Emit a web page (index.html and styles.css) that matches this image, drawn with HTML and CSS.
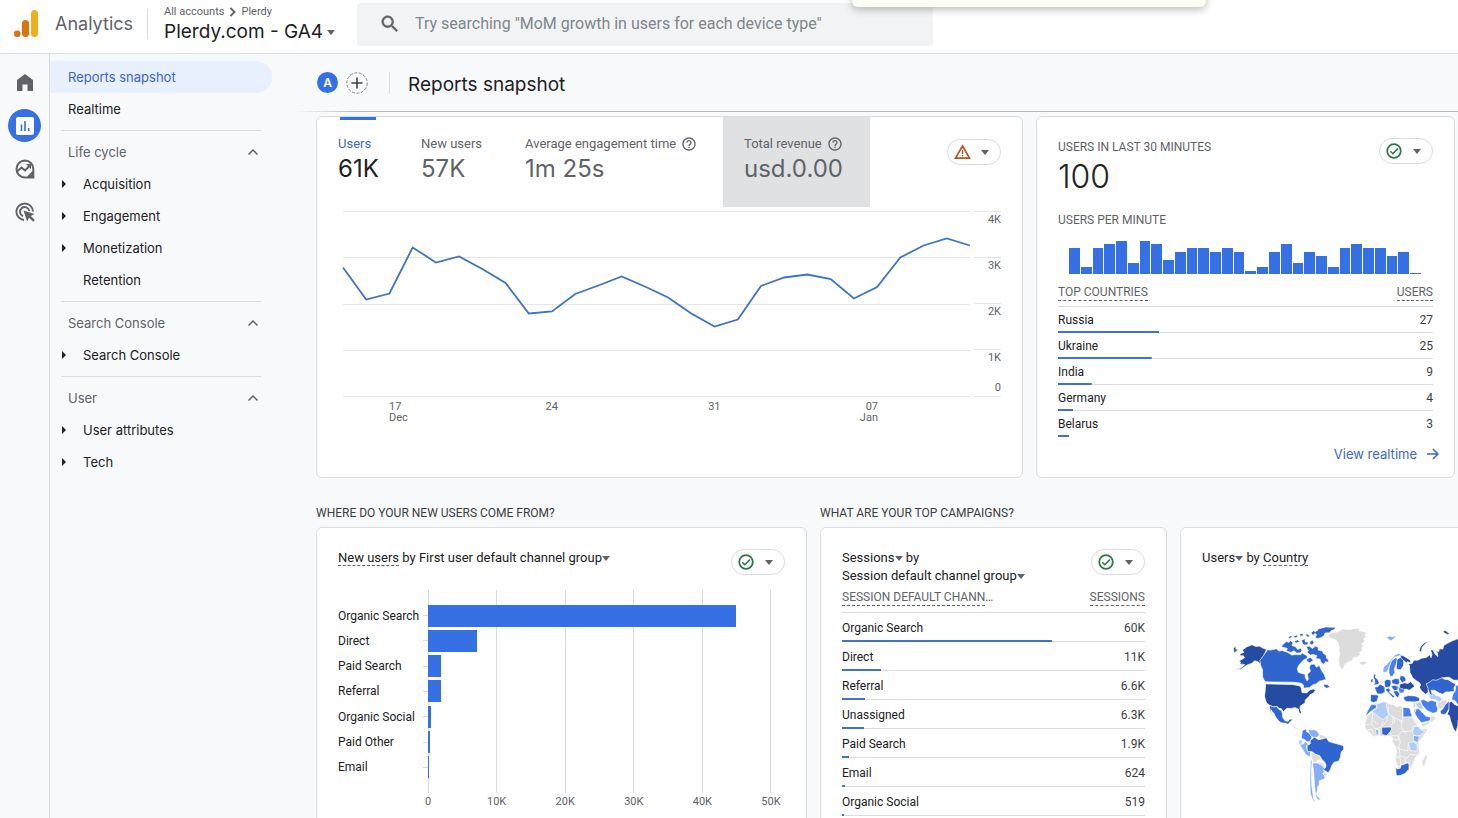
FILE: index.html
```html
<!DOCTYPE html>
<html lang="en">
<head>
<meta charset="utf-8">
<meta name="viewport" content="width=device-width, initial-scale=1">
<title>Analytics - Reports snapshot</title>
<link rel="stylesheet" href="styles.css">
</head>
<body>
<svg class="defs" aria-hidden="true">
  <symbol id="ok" viewBox="0 0 24 24"><circle cx="12" cy="12" r="10.2" fill="none" stroke="#2b7a43" stroke-width="2.6"/><path d="M6.6 12.4l3.7 3.7 7.4-7.6" fill="none" stroke="#2b7a43" stroke-width="2.4"/></symbol>
  <symbol id="help" viewBox="0 0 24 24"><path fill="#5f6368" d="M11 18h2v-2h-2v2zm1-16C6.48 2 2 6.48 2 12s4.48 10 10 10 10-4.480 10-10S17.520 2 12 2zm0 18c-4.410 0-8-3.590-8-8s3.590-8 8-8 8 3.590 8 8-3.590 8-8 8zm0-14c-2.210 0-4 1.790-4 4h2c0-1.100.9-2 2-2s2 .9 2 2c0 2-3 1.750-3 5h2c0-2.250 3-2.500 3-5 0-2.210-1.790-4-4-4z"/></symbol>
  <symbol id="up" viewBox="0 0 12 12"><path d="M1.500 8.500L6 4l4.500 4.500" fill="none" stroke="#5f6368" stroke-width="1.500"/></symbol>
</svg>

<header class="topbar">
  <a class="brand" href="#">
    <svg width="24" height="28" viewBox="0 0 24 28" aria-hidden="true"><rect x="17" y="0" width="7" height="27" rx="3.500" fill="#efb01c"/><rect x="8" y="10" width="7" height="17" rx="3.500" fill="#d9730d"/><circle cx="3.300" cy="23.700" r="3.300" fill="#d9730d"/></svg>
    <span>Analytics</span>
  </a>
  <div class="account">
    <nav class="crumbs" aria-label="Account"><span>All accounts</span><svg width="7" height="10" viewBox="0 0 7 10" aria-hidden="true"><path d="M1.500 1l4 4-4 4" fill="none" stroke="#5f6368" stroke-width="1.800"/></svg><span>Plerdy</span></nav>
    <button class="property">Plerdy.com - GA4<i class="caret"></i></button>
  </div>
  <label class="search">
    <svg width="22" height="22" viewBox="0 0 24 24" aria-label="Search"><path fill="#5f6368" stroke="#5f6368" stroke-width=".5" d="M15.500 14h-.79l-.28-.27C15.410 12.590 16 11.110 16 9.500 16 5.910 13.090 3 9.500 3S3 5.910 3 9.500 5.910 16 9.500 16c1.610 0 3.090-.59 4.230-1.570l.27.280v.79l5 4.990L20.490 19l-4.990-5zm-6 0C7.010 14 5 11.990 5 9.500S7.010 5 9.500 5 14 7.010 14 9.500 11.990 14 9.500 14z"/></svg>
    <input type="search" placeholder="Try searching &quot;MoM growth in users for each device type&quot;">
  </label>
  <div class="popup"></div>
</header>

<div class="app">
  <nav class="rail" aria-label="Primary">
    <a href="#" aria-label="Home"><svg width="16" height="17" viewBox="0 0 16 17"><path fill="#5f6368" d="M0 17V6l8-6 8 6v11h-5.500v-6.500h-5V17z"/></svg></a>
    <a href="#" class="current" aria-label="Reports"><svg width="18" height="18" viewBox="0 0 18 18"><rect width="18" height="18" rx="2" fill="#fff"/><path d="M5.500 7.500V14M9 4v10M12.700 11v3" stroke="#3571e5" stroke-width="1.600"/></svg></a>
    <a href="#" aria-label="Explore"><svg width="20" height="20" viewBox="0 0 20 20"><path fill="none" stroke="#5f6368" stroke-width="2" d="M10 1.500a8.500 8.500 0 1 0 0 17h8.300V10A8.400 8.400 0 0 0 10 1.500z"/><path fill="none" stroke="#5f6368" stroke-width="2" d="M2 12.500l4.500-4 3.500 3 4.500-4.500M18 13l-5 5"/><path fill="#5f6368" d="M11 5h5v5zM19 13v6h-6z"/></svg></a>
    <a href="#" aria-label="Advertising"><svg width="20" height="20" viewBox="0 0 20 20"><path fill="none" stroke="#5f6368" stroke-width="1.900" d="M9 18A8.300 8.300 0 1 1 18 9.500M8 14.200A4.700 4.700 0 1 1 14.300 9"/><path fill="#5f6368" d="M8.500 8.500l11 3.600-3.700 2 4 4-1.700 1.700-4-4-2 3.700z"/></svg></a>
  </nav>

  <nav class="side" aria-label="Reports">
    <a href="#" class="item selected">Reports snapshot</a>
    <a href="#" class="item">Realtime</a>
    <hr>
    <button class="group">Life cycle<svg width="12" height="12"><use href="#up"/></svg></button>
    <a href="#" class="item sub more">Acquisition</a>
    <a href="#" class="item sub more">Engagement</a>
    <a href="#" class="item sub more">Monetization</a>
    <a href="#" class="item sub">Retention</a>
    <hr>
    <button class="group">Search Console<svg width="12" height="12"><use href="#up"/></svg></button>
    <a href="#" class="item sub more">Search Console</a>
    <hr>
    <button class="group">User<svg width="12" height="12"><use href="#up"/></svg></button>
    <a href="#" class="item sub more">User attributes</a>
    <a href="#" class="item sub more">Tech</a>
  </nav>

  <main class="main">
    <div class="titlebar">
      <button class="avatar">A</button>
      <button class="add" aria-label="Add comparison"><svg width="22" height="22" viewBox="0 0 22 22"><circle cx="11" cy="11" r="10.200" fill="none" stroke="#80868b" stroke-dasharray="3 1.500"/><path d="M11 5.500v11M5.500 11h11" stroke="#3c4043" stroke-width="1.600"/></svg></button>
      <h1>Reports snapshot</h1>
    </div>

    <div class="row top">
      <section class="card trend">
        <div class="metrics">
          <button class="metric users on"><span>Users</span><b>61K</b></button>
          <button class="metric new"><span>New users</span><b>57K</b></button>
          <button class="metric time"><span>Average engagement time<svg width="16" height="16"><use href="#help"/></svg></span><b>1m 25s</b></button>
          <button class="metric revenue"><span>Total revenue<svg width="16" height="16"><use href="#help"/></svg></span><b>usd.0.00</b></button>
          <button class="status" aria-label="Data warning"><svg width="17" height="16" viewBox="0 0 17 16"><path d="M8.500 2L15.500 14.200H1.500z" fill="none" stroke="#b5541c" stroke-width="1.700"/><path d="M8.500 6.300v3.700M8.500 11v1.600" stroke="#b5541c" stroke-width="1.500"/></svg><i class="caret"></i></button>
        </div>
        <div class="chart">
          <svg class="line" viewBox="0 0 627 187" preserveAspectRatio="none" aria-label="Users per day">
            <path d="M0 .5H627M0 46.500H627M0 93.500H627M0 139.500H627M0 185.500H627" stroke="#e4e6e8" vector-effect="non-scaling-stroke"/>
            <polyline fill="none" stroke="#3f72c8" stroke-width="1.800" vector-effect="non-scaling-stroke" points="0,56.500 23.200,88.500 46.400,82.500 69.700,36.500 92.900,51.500 116.100,45.500 139.300,58 162.600,72 185.800,102.500 209,100.500 232.200,83 255.400,74.500 278.700,65.500 301.900,75.500 325.100,86.500 348.300,102.500 371.600,115.500 394.800,108.500 418,75 441.200,66.500 464.400,63.500 487.700,68 510.900,87.500 534.100,76 557.300,46.500 580.600,34.500 603.800,27.500 627,34.500"/>
          </svg>
          <div class="yaxis"><div>4K</div><div>3K</div><div>2K</div><div><span>1K</span><span>0</span></div></div>
          <div class="xaxis"><span>17<br>Dec</span><span>24</span><span>31</span><span>07<br>Jan</span></div>
        </div>
      </section>

      <section class="card live">
        <div class="head">
          <div><h2 class="label">USERS IN LAST 30 MINUTES</h2><p class="big">100</p></div>
          <button class="status" aria-label="Data quality"><svg width="16" height="16"><use href="#ok"/></svg><i class="caret"></i></button>
        </div>
        <h3 class="label">USERS PER MINUTE</h3>
        <div class="minutes">
          <i style="height:26px"></i><i style="height:7px"></i><i style="height:26px"></i><i style="height:30px"></i><i style="height:33px"></i><i style="height:11px"></i><i style="height:33px"></i><i style="height:30px"></i><i style="height:14px"></i><i style="height:22px"></i><i style="height:26px"></i><i style="height:26px"></i><i style="height:22px"></i><i style="height:26px"></i><i style="height:22px"></i><i style="height:3px"></i><i style="height:7px"></i><i style="height:22px"></i><i style="height:30px"></i><i style="height:11px"></i><i style="height:22px"></i><i style="height:18px"></i><i style="height:7px"></i><i style="height:26px"></i><i style="height:30px"></i><i style="height:26px"></i><i style="height:26px"></i><i style="height:18px"></i><i style="height:22px"></i><i style="height:1px"></i>
        </div>
        <table class="data countries">
          <thead><tr><th><span>TOP COUNTRIES</span></th><th><span>USERS</span></th></tr></thead>
          <tbody>
            <tr style="--share:27%"><td>Russia</td><td>27</td></tr>
            <tr style="--share:25%"><td>Ukraine</td><td>25</td></tr>
            <tr style="--share:9%"><td>India</td><td>9</td></tr>
            <tr style="--share:4%"><td>Germany</td><td>4</td></tr>
            <tr style="--share:3%"><td>Belarus</td><td>3</td></tr>
          </tbody>
        </table>
        <a class="more-link" href="#">View realtime<svg width="12" height="12" viewBox="0 0 12 12" aria-hidden="true"><path d="M0 6h10.500M6 1l5 5-5 5" fill="none" stroke="#4165c8" stroke-width="1.500"/></svg></a>
      </section>
    </div>

    <div class="row bottom">
      <h2 class="question">WHERE DO YOUR NEW USERS COME FROM?</h2>
      <h2 class="question wide">WHAT ARE YOUR TOP CAMPAIGNS?</h2>

      <section class="card">
        <div class="head">
          <h3><span class="dash">New users</span> by First user default channel group<i class="caret"></i></h3>
          <button class="status" aria-label="Data quality"><svg width="16" height="16"><use href="#ok"/></svg><i class="caret"></i></button>
        </div>
        <div class="channels">
          <div class="names"><span>Organic Search</span><span>Direct</span><span>Paid Search</span><span>Referral</span><span>Organic Social</span><span>Paid Other</span><span>Email</span></div>
          <div class="bars">
            <div><i style="width:90.200%"></i></div><div><i style="width:14.300%"></i></div><div><i style="width:3.800%"></i></div><div><i style="width:3.800%"></i></div><div><i style="width:.9%"></i></div><div><i style="width:.6%"></i></div><div><i style="width:.3%"></i></div>
          </div>
          <div class="scale"><span>0</span><span>10K</span><span>20K</span><span>30K</span><span>40K</span><span>50K</span></div>
        </div>
      </section>

      <section class="card">
        <div class="head">
          <h3>Sessions<i class="caret"></i> by<br>Session default channel group<i class="caret"></i></h3>
          <button class="status" aria-label="Data quality"><svg width="16" height="16"><use href="#ok"/></svg><i class="caret"></i></button>
        </div>
        <table class="data sessions">
          <thead><tr><th><span>SESSION DEFAULT CHANN</span>…</th><th><span>SESSIONS</span></th></tr></thead>
          <tbody>
            <tr style="--share:69.300%"><td>Organic Search</td><td>60K</td></tr>
            <tr style="--share:13%"><td>Direct</td><td>11K</td></tr>
            <tr style="--share:7.700%"><td>Referral</td><td>6.6K</td></tr>
            <tr style="--share:7.400%"><td>Unassigned</td><td>6.3K</td></tr>
            <tr style="--share:2.400%"><td>Paid Search</td><td>1.9K</td></tr>
            <tr style="--share:1%"><td>Email</td><td>624</td></tr>
            <tr style="--share:.7%"><td>Organic Social</td><td>519</td></tr>
          </tbody>
        </table>
      </section>

      <section class="card">
        <div class="head"><h3>Users<i class="caret"></i> by <span class="dash">Country</span></h3></div>
        <svg class="map" viewBox="69 60 906 560" aria-label="Users by country map">
          <g class="land">
            <path d="M443 108l15-10 18-3 14-8 20 2 18-4 14 1-3 6 12 2 17 6-12 2 4 8-8 6 4 8-9 6 5 8-6 5 3 8-9 6 3 7-8 6-14 4-3 8-14 4-8 8-5 14-6-2-6-12-2-18 5-14-4-10 2-12-6-14-6-8-12-3zM539 187l8-4 10 1 5 5-10 6-8-2z"/>
            <path d="M336 368l8 4 4 8 7 5-2 3-8-4-4-9zM368 360l8 2-5 2zM384 361l6 1-3 2zM139 351l4 3-4 1z"/>
            <path d="M418 402l12 2 10 6-3 6-16-2zM394 457l10-4 10 10 8 4 4 10-12 2-4 8-9-1-4-14zM418 484l12 4 7 10-6 4-12-8zM434 514l10 8-4 8-8-3z"/>
            <path d="M582 310l38-5 8 6 14 2 10 8 8-5 10 6 20 2 6 24 8 14 10 14 5 8 8 2 16-3-2 10-16 22-8 8 0 14 3 20-14 16-2 8-6 12-12 16-10 7-14 2-6-12-6-20-4-12 5-18-4-18-10-18 2-8-8-6-16 2-16-2-18 2-12-12-10-6-4-18 8-22 18-20zM740 461l3 8-9 28-7-4 1-12z"/>
            <path d="M700 308l8-2 2 14-10 4zM772 306l14-4 14-6 2 10-12 18-14 3zM754 346l10 2 4 6-12 12-6-3zM724 370l24-6 2 6-22 10z"/>
          </g>
          <path class="borders" d="M592 322l30 18v22l-14 14M626 320v20l14 10 28 14 2-42M548 372h28l4-38M640 350l-2 22-12 10 10 24h20l10-12 28-2 10-18M668 350h30M666 362v20l14 20M556 388h22l4 14M576 372l12 14 18-6 4-16M600 388v16M628 418h28v-12M656 406l6 18-6 22 30 6M636 442h22l4 26-22 4M662 468l22 4 6-10 22 2M636 472h26v26h-20M662 498l14-14 14 4M676 484v-12M686 426l-2 26M644 352v18M580 360l16 12"/>
          <path class="c1" d="M262 148l-19 43-8-7-8-2-10 8-12 4-18 12-20 5 20-9 10-8-6-2-10 0 4-6-6-3 10-6 7-4-3-6-9 0-2-6 12-4-4-7 12-9 16-7 12 5 10-1 9 5zM163 145l7-8 0 10 7 2-6 5-6 5-1-8z"/>
          <path class="c2" d="M265 149l10 1 16-4 8 7 10-2 16 6 13 8 10-2 16 1 4-6 8 5 8 4 0 7-12 6-14 16-4 10 3 10 10 4 10 2 1 11 5 9 4-5-3-14 9-10-3-12 4-9 12 0 5 9 9-5 7 16 8 12 5 14-20 5-10 8-10 3-9 8-18 2-1-10-7-5-22-3-83-1-6-6-4-10 0-20-6-14-2-14zM432 252l12 1 8 8-10 3-8-4z"/>
          <path class="c2" d="M306 140l6-8 10-8 6 3 6-5 7 6-3 8 11 4 6 8 9-4 4 8-4 6-12 1-8-7-10 5-13-5 3-7zM326 112l9-6 4 5-8 4zM342 110l10-6 3 6-8 4zM360 102l9-2 4 6-9 3zM378 104l5-3 8 6-5 5zM344 124l11-5 6 6-10 4zM366 120l12-4-1 9 10 1-2 8-12 1-4-6zM392 124l8-4 4 8-6 7-7-3zM380 140l10-2 9 7 10-7 8 4-1 8 12 2 4 8 9 6 0 8 6 5 0 8-9-3-4 9-10-7-2-9-14-2 5-8-12-4-8 2-10-8 4-6zM382 176l12-4 8 8-10 8-9-4zM395 98l7-6 7 3 10-9 20-5 28 1 0 6-12 4-4 6-14 1-3 8-10 6-12 3-4-6 4-6-5-4-7 6z"/>
          <path class="c1" d="M259 251l80 2 23 4 4 7 2 13 14 1 10-9 10-3 6 5-5 7-10 5-4 6-6 5-5 5-1 9-14 9-1 8 4 11-2 5-5-5-2-10-11-4-12 3-11-1-11 10-6-9-7-1-5-5-10 1-12-4-10-8-3-8-3-12 2-18z"/>
          <path class="c2" d="M270 315l14 5 8-1 8 9 6 2 3 9 1 12 7 10 10 2 3-6 10-1-3 6-6 4-4 6-10-3-12-2-9-7-5-8-4-6-3-7-5-5-4-6 2 12 5 9-5-5-4-12z"/>
          <path class="c3" d="M369 391l11-6 2 9 12 6 3 12-5 12-9 0-8-7-9-3zM628 198l9-18 12-8 5 6-5 16-5 13 2 9-7 12-7 1-4-10zM670 321l20 2 3 12 5 14-28 1zM702 326l14-1 14 14 8 8 15 4-2 10-26 6-12-14-10-18zM722 300l10-2 12 6 12-4 14 5 0 10 4 9-2 11-12 4-18-8-8-9-8-10zM818 284l8-12 2-16 20-4 70 12-8 50-50 10-26-10-8-12-10-4zM576 312l14 2 1 8-14 9-13 11-7 9 7-20zM655 260l12 0 8 6-3 12-13 0z"/>
          <path class="c4" d="M386 386l10 3 8-1 10 4 6 12-8 7-10 0-8-5-5-9zM360 431l12 0 6-8 9 9-6 5 2 9 10 10 0 15-14-9-10-16zM399 488l14-1 16 9 7 8-1 10-5 6 6 6 0 8-16 7-1 12-4 6-1 12-3 8 3 9 8 6 2 5-10-2-5-10-3-26-2-30-2-24zM394 470l4 14-2 32 1 36 6 44 6 8-8-4-8-20-1-30 0-30zM610 216l1-14 13-12 10-12 12-14 12-4 9 4-10 4-12 3-9 9-4 12-5 14-7 11zM620 112l10-4 8 2 14-3-10 9-8 7zM701 406l10-1 8 4-5 18-12-6zM588 388l8-1 1 16-7 1zM704 328l5-2-2 10z"/>
          <path class="c5" d="M358 420l12-2-2 12-10 3zM591 311l18-6 11 1 1 16 6 21-17 15-32-24 14-11zM704 377l14 2 5 9 13 5-12 11-15 3-11-8zM686 427l15-3 12 10-1 18-20-2zM708 308l14-4 4 12 9 12-16-4-10-8zM744 276l10-2 14 12 10 2 10 8-8 10-14-8-14-2z"/>
          <path class="c2" d="M383 436l10-6-1-10 7-4 6-6 12 8 10-2 14-4 7 11 12 4 12 3 20 6 1 10-8 10-2 14-5 12-14 3-7 10-4 12-7 10-9-6-7-1 8-8 2-7-4-10-8-8-7-11-13-5-10-7-14-2zM583 221l6 3-2 7 7 6 5 11-3 5-15 1 5-6-1-9-4-8zM574 238l7-3-1 10-7 4zM573 283l21 1 3 4-5 15-10 4-9-3zM584 261l11-2 6-8 15 9 0 16-10 5-13 0zM614 243l8-6 12 3 0 12-4 9-14 1zM636 239l12-4 10 1 2 12-6 6-17-4zM652 178l10-6 4-8 6 8 0 24-8 12-12 1-2-8zM616 268l12-5 4 6-2 7 15 12-5 5-9-10-8-9zM634 258l10-3 12 4-2 10-10 3zM640 272l12-1 8 9-4 12-7-3zM662 226l12 2 6 12-12 8-8-10zM672 290l14-4 20 1 14 6-1 9-14 3-24-1-8-5zM606 381l28-1 2 7-8 12-8 7-13-4zM648 501l4 4 10-2 2-9 10-3 10-4 4 6 0 13-12 13-14 6-12 1zM781 332l8-6 8-14 10-8 6 6-4 14-8 12-5 7-13-2zM722 250l10-3 2-7 18 0 14-7 20-2 6 6 12 1 14 9 10 4-6 12 2 10-14 2-12 0-10 7-10-4-14-8-10 0 4 16-8-4-4-12-12-4z"/>
          <path class="c1" d="M661 251l14-3 10 2 7-6 9 9 4 6-11 7-5 4-8-3-10 0-12-5zM664 174l-2-9 10 3 20 12 2 8-12-3 2 7 14-3 4-9 12 0 12-6 14-2 10-8 4 9 3-10-5-14 8 1 6 12 8 7-1-10-6-8 10 4 2-9 10 1 3-11 12-7 14-7 14-5 20-10 90 2v160l-76-14-16-3-16-12-12 0-14-9-22 2-16 7-12-1-10 8-9 4 6 14 0 12-8 5-12-11-6-10 4-6-4-8-10-6-10-8-8-16-2-22zM718 152l4-12 12-12 13-5-12 10-8 9-2 14zM790 92l8 0 12 9-8 2-10-5zM808 306l7-2 8 8 14 6 20 6-10 22-12 14-1 16-6 19-7-9-9-26-3-14-7-4 5-12z"/>
        </svg>
      </section>
    </div>
  </main>
</div>
</body>
</html>
```
FILE: styles.css
```css
* { box-sizing: border-box; }

:root {
  --ui: Inter, "Liberation Sans", sans-serif;
  --text: Roboto, "Liberation Sans", sans-serif;
  --blue: #3571e5;
  --link: #4165c8;
  --grey: #5f6368;
  --ink: #202124;
  --rule: #dadce0;
}

body {
  margin: 0;
  height: 100vh;
  display: flex;
  flex-direction: column;
  overflow: hidden;
  background: #f8f9fb;
  color: var(--ink);
  font: 13px/18px var(--ui);
}

h1, h2, h3, p { margin: 0; font-weight: 400; }
a { color: inherit; text-decoration: none; }
button { border: 0; padding: 0; background: none; color: inherit; font: inherit; cursor: pointer; }
svg { display: block; flex: none; }
.defs { position: absolute; width: 0; height: 0; }

.caret {
  display: inline-block;
  flex: none;
  border: 4px solid transparent;
  border-top: 5px solid var(--grey);
  border-bottom: 0;
  vertical-align: middle;
}

/* Top bar */
.topbar {
  flex: none;
  display: flex;
  align-items: center;
  height: 54px;
  padding-bottom: 5px;
  background: #fff;
  border-bottom: 1px solid var(--rule);
}
.brand {
  display: flex;
  align-items: center;
  gap: 17px;
  width: 148px;
  height: 30px;
  padding-left: 14px;
  border-right: 1px solid var(--rule);
  color: var(--grey);
  font-size: 18px;
}
.account { width: 209px; padding-left: 16px; }
.crumbs { display: flex; align-items: center; gap: 5px; color: var(--grey); font: 11px/16px var(--text); }
.property { display: flex; align-items: center; gap: 4px; font-size: 19px; line-height: 24px; white-space: nowrap; }
.search {
  display: flex;
  align-items: center;
  gap: 14px;
  width: 576px;
  height: 43px;
  padding: 0 22px;
  border-radius: 4px;
  background: #f1f3f4;
}
.search input {
  flex: 1;
  min-width: 0;
  padding: 0;
  border: 0;
  outline: 0;
  background: none;
  font: 16px/20px var(--text);
}
.search input::placeholder { color: #80868b; }
.popup {
  position: absolute;
  top: -8px;
  left: 852px;
  width: 354px;
  height: 15px;
  border-radius: 6px;
  background: #fdfff6;
  box-shadow: 0 2px 8px rgba(0, 0, 0, .3);
}

.app { flex: 1; min-height: 0; display: flex; }

/* Icon rail */
.rail {
  flex: none;
  width: 50px;
  padding-top: 12px;
  border-right: 1px solid var(--rule);
}
.rail a {
  display: grid;
  place-items: center;
  width: 33px;
  height: 33px;
  margin: 0 auto 10px 8px;
  border-radius: 50%;
}
.rail .current { background: var(--blue); }

/* Report navigation */
.side { flex: none; width: 222px; padding-top: 7px; }
.side hr { margin: 5px 11px; border: 0; border-top: 1px solid var(--rule); }
.item, .group {
  display: flex;
  align-items: center;
  width: 100%;
  height: 32px;
  padding-left: 18px;
}
.selected { border-radius: 0 16px 16px 0; background: #e8f0fe; color: var(--link); }
.group { justify-content: space-between; padding-right: 13px; color: var(--grey); }
.sub { padding-left: 33px; }
.more { padding-left: 12px; }
.more::before {
  content: "";
  margin-right: 17px;
  border: 4px solid transparent;
  border-left-color: var(--ink);
  border-right: 0;
}

/* Report canvas */
.main { flex: 1; min-width: 0; overflow: hidden; }
.titlebar {
  display: flex;
  align-items: center;
  height: 58px;
  padding-left: 45px;
  border-bottom: 1px solid;
  border-image: linear-gradient(90deg, transparent 20px, #b4b9bd 90px) 1;
}
.avatar {
  width: 21px;
  height: 21px;
  border-radius: 50%;
  background: var(--blue);
  color: #fff;
  font-size: 12px;
  font-weight: 600;
}
.add { margin: 0 21px 0 8px; }
.titlebar h1 { padding: 3px 0 0 18px; border-left: 1px solid var(--rule); font-size: 19px; line-height: 19px; }

.row { display: grid; column-gap: 13px; margin: 0 3px 0 44px; }
.card { min-width: 0; padding: 21px; border: 1px solid var(--rule); border-radius: 6px; background: #fff; }
.top { grid-template-columns: 707fr 419fr; margin-top: 4px; }
.bottom { grid-template-columns: 491fr 347fr 347fr; margin-right: -69px; }

.status {
  display: flex;
  flex: none;
  align-items: center;
  justify-content: space-between;
  width: 54px;
  height: 26px;
  padding: 0 11px 0 6px;
  border: 1px solid var(--rule);
  border-radius: 13px;
  background: #fff;
}
.head { display: flex; align-items: flex-start; justify-content: space-between; }
.head h3 { font: 13px/18px var(--text); white-space: nowrap; }
.dash { border-bottom: 1px dashed var(--grey); }

/* Daily trend */
.trend { padding: 0 21px 0 0; }
.metrics { display: flex; height: 90px; }
.metric { display: flex; flex-direction: column; flex: none; padding: 18px 0 0 21px; color: var(--grey); text-align: left; white-space: nowrap; }
.metric span { display: flex; align-items: center; gap: 5px; font-family: var(--text); }
.metric b { font-size: 24px; line-height: 32px; font-weight: 400; }
.metric.users { width: 83px; }
.metric.new { width: 104px; }
.metric.time { width: 219px; }
.metric.revenue { width: 147px; background: #e0e1e3; }
.metric.on { color: var(--ink); background: linear-gradient(var(--blue), var(--blue)) 23px 0 / 36px 3px no-repeat; }
.metric.on span { color: var(--link); }
.metrics .status { margin: 22px 0 0 auto; }
.chart {
  display: grid;
  grid-template-columns: 1fr 27px;
  column-gap: 4px;
  margin: 4px 0 0 26px;
  color: var(--grey);
  font: 11px/16px var(--text);
}
.line { width: 100%; height: 187px; overflow: visible; }
.yaxis { text-align: right; }
.yaxis div { display: flex; flex-direction: column; justify-content: space-between; height: 46px; border-top: 1px solid #e4e6e8; }
.yaxis div:last-child { height: 48px; border-bottom: 1px solid #e4e6e8; }
.xaxis { display: grid; grid-template-columns: 81fr 162fr 162fr 82fr; padding: 3px 92px 0 46px; line-height: 11px; text-align: center; }
.xaxis span:first-child { text-align: left; }
.xaxis span:last-child { text-align: right; }

/* Realtime */
.live { padding-bottom: 14px; }
.label { color: var(--grey); font: 12px/18px var(--text); }
.big { font-size: 32px; line-height: 42px; font-weight: 300; }
.live h3 { margin-top: 13px; }
.minutes { display: flex; align-items: flex-end; gap: 1px; height: 33px; margin: 12px 12px 0 11px; }
.minutes i { flex: 1; background: var(--blue); }

.data { width: 100%; border-spacing: 0; font: 12px/18px var(--text); }
.data th { height: 33px; padding: 3px 0 0; border-bottom: 1px solid var(--rule); color: var(--grey); font-weight: 400; text-align: left; }
.data th span { display: inline-block; line-height: 16px; border-bottom: 1px dashed var(--grey); }
.data td { padding: 0; }
.data th:last-child, .data td:last-child { text-align: right; }
.data td:last-child { color: #3c4043; }
.data tbody tr {
  height: 26px;
  background:
    linear-gradient(#3f72c8, #3f72c8) 0 100% / var(--share) 2px no-repeat,
    linear-gradient(var(--rule), var(--rule)) 0 100% / 100% 1px no-repeat;
}
.countries tbody tr:last-child { background: linear-gradient(#3f72c8, #3f72c8) 0 100% / var(--share) 2px no-repeat; }
.sessions th { height: 28px; padding: 0 0 3px; }
.sessions tbody tr { height: 29px; }
.more-link { display: flex; align-items: center; justify-content: flex-end; gap: 10px; margin: 8px -6px 0 0; color: var(--link); }

/* Channel breakdown */
.question { margin: 26px 0 5px; color: #3c4043; font: 12px/18px var(--text); }
.question.wide { grid-column: span 2; }
.channels { display: grid; grid-template-columns: 90px 1fr; margin: 15px 14px 0 0; font: 12px/18px var(--text); }
.names, .bars { display: flex; flex-direction: column; padding: 13px 0; height: 203px; }
.names span, .bars div { flex: 1; display: flex; align-items: center; white-space: nowrap; }
.names span::after { content: ""; margin-left: auto; width: 5px; border-top: 1px solid var(--rule); }
.bars { border-right: 1px solid var(--rule); background: repeating-linear-gradient(90deg, var(--rule) 0 1px, transparent 1px 20%); }
.bars i { height: 22px; min-width: 1px; background: var(--blue); }
.scale { grid-column: 2; display: flex; justify-content: space-between; margin: 0 -20px; color: var(--grey); font-size: 11px; }
.scale span { width: 40px; text-align: center; }

/* Country map */
.map { width: 100%; height: auto; margin-top: 53px; stroke: #fff; stroke-width: 2; stroke-linejoin: round; }
.land { fill: #dcdcdc; }
.borders { fill: none; }
.c1 { fill: #254ba3; }
.c2 { fill: #3065d0; }
.c3 { fill: #4780ec; }
.c4 { fill: #86aef5; }
.c5 { fill: #aecbfa; }
```
